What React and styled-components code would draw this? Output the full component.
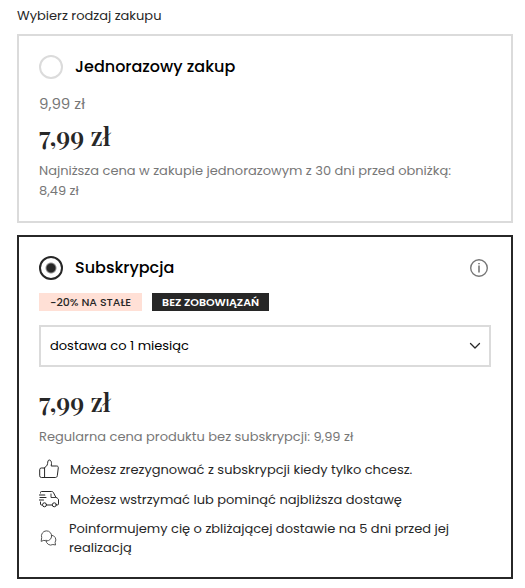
import React, { useState } from 'react'
import styled, { createGlobalStyle } from 'styled-components'

const GlobalStyle = createGlobalStyle`
  * {
    box-sizing: border-box;
  }

  body {
    margin: 0;
    background: #fff;
    color: #272727;
    font-family: Poppins, Inter, sans-serif;
    font-size: 13px;
    line-height: 20px;
  }
`

const Form = styled.form`
  padding: 6px 12px 8px 17px;
`

const Options = styled.fieldset`
  display: flex;
  flex-direction: column;
  gap: 12px;
  min-width: 0;
  margin: 0;
  padding: 0;
  border: 0;
`

const Legend = styled.legend`
  margin-bottom: 8px;
  padding: 0;
`

const Card = styled.section`
  padding: 19px 20px 20px;
  border: 2px solid ${({ $active }) => ($active ? '#272727' : '#dbdbdb')};
`

const CardHeader = styled.header`
  display: flex;
  align-items: center;
  justify-content: space-between;
`

const OptionLabel = styled.label`
  display: flex;
  align-items: center;
  gap: 12px;
  color: #000;
  font-size: 16px;
  font-weight: 500;
  line-height: 24px;
  cursor: pointer;
`

const Radio = styled.input`
  appearance: none;
  flex: none;
  width: 24px;
  height: 24px;
  margin: 0;
  border: 2px solid #dbdbdb;
  border-radius: 50%;

  &:checked {
    border-color: #272727;
    background: radial-gradient(circle, #272727 4px, transparent 6px);
  }
`

const InfoButton = styled.button`
  display: flex;
  padding: 2px;
  border: 0;
  background: none;
  color: #777;
`

const OldPrice = styled.p`
  margin: 15px 0 0;
  color: #777;
  font-size: 15px;
`

const Price = styled.p`
  margin: 3px 0 6px;
  font-family: 'Playfair Display', 'Liberation Serif', serif;
  font-size: 26px;
  font-weight: 600;
  line-height: 38px;
`

const Note = styled.p`
  margin: 0;
  color: #777;
`

const Tags = styled.div`
  display: flex;
  gap: 10px;
  margin: 13px 0 14px;
`

const Tag = styled.span`
  padding: 0 ${({ $dark }) => ($dark ? 10 : 11)}px;
  background: ${({ $dark }) => ($dark ? '#272727' : '#ffe0d6')};
  color: ${({ $dark }) => ($dark ? '#fff' : '#272727')};
  font-size: 11px;
  font-weight: ${({ $dark }) => ($dark ? 600 : 500)};
  line-height: 18px;
`

const SelectField = styled.div`
  display: grid;
  align-items: center;
  margin-bottom: 16px;

  > * {
    grid-area: 1 / 1;
  }

  svg {
    justify-self: end;
    margin-right: 10px;
    pointer-events: none;
  }
`

const Select = styled.select`
  appearance: none;
  width: 100%;
  height: 42px;
  padding: 0 32px 0 9px;
  border: 2px solid #dbdbdb;
  border-radius: 0;
  background: #fff;
  color: #000;
  font: inherit;
`

const Benefits = styled.ul`
  display: flex;
  flex-direction: column;
  gap: 10px;
  margin: 12px 0 0;
  padding: 0;
  line-height: 19px;
  list-style: none;
`

const Benefit = styled.li`
  display: flex;
  align-items: center;
  gap: 11px;

  svg {
    flex: none;
  }
`

const strokeProps = {
  fill: 'none',
  stroke: 'currentColor',
  strokeLinecap: 'round',
  strokeLinejoin: 'round',
  'aria-hidden': true,
}

const InfoIcon = () => (
  <svg width="20" height="20" viewBox="0 0 20 20" {...strokeProps}>
    <circle cx="10" cy="10" r="8.3" strokeWidth="1.4" />
    <path d="M10 7.5v7M10 5v1.3" strokeWidth="1.6" strokeLinecap="butt" />
  </svg>
)

const ChevronIcon = () => (
  <svg width="12" height="8" viewBox="0 0 12 8" {...strokeProps}>
    <path d="M1.5 1.5L6 6l4.5-4.5" stroke="#272727" strokeWidth="1.3" />
  </svg>
)

const ThumbIcon = () => (
  <svg width="20" height="20" viewBox="0 0 20 20" {...strokeProps}>
    <path d="M5.2 18.5H2.4Q.7 18.5.7 16.8v-6.1Q.7 9 2.4 9h2.8zM5.2 9l2-1.6c.8-.7 1.2-1.8 1.4-3C8.8 2.5 9 1 10.3 1c1.7 0 2.2 2 2.2 3.5L12.2 7h5.5c1.1 0 1.7.7 1.6 1.7l-1 8c-.1 1.1-.8 1.8-1.9 1.8H5.2" />
  </svg>
)

const VanIcon = () => (
  <svg width="20" height="20" viewBox="0 0 20 20" {...strokeProps}>
    <path d="M1.5 4V3.5Q1.5 2.5 2.5 2.5h10.2c.8 0 1.3.3 1.7 1l2.4 4.7 2 1.3c.5.3.7.7.7 1.2v4.2q0 1-1 1h-.7M12.800 16H8M3 16h-.5q-1 0-1-1v-2" />
    <path d="M12 5v3.5h4.5" strokeWidth=".9" />
    <path d="M.3 6h5.5M1 8.5h6M.3 11h4.2" strokeWidth="1.1" />
    <circle cx="5.5" cy="15.8" r="2" />
    <circle cx="15.3" cy="15.8" r="2" />
  </svg>
)

const ChatIcon = () => (
  <svg width="19" height="20" viewBox="0 0 19 20" {...strokeProps}>
    <path
      d="M2.2 13l.5-3.4A5.1 5.1 0 1 1 5.2 12.5zM12.3 7.2a4.6 4.6 0 0 1 3.800 7.100l.4 2.700-2.600-.5a4.600 4.600 0 0 1-6.800-4.300"
      stroke="#555"
    />
  </svg>
)

const benefits = [
  { icon: ThumbIcon, text: 'Możesz zrezygnować z subskrypcji kiedy tylko chcesz.' },
  { icon: VanIcon, text: 'Możesz wstrzymać lub pominąć najbliższa dostawę' },
  {
    icon: ChatIcon,
    text: 'Poinformujemy cię o zbliżającej dostawie na 5 dni przed jej realizacją',
  },
]

const PurchaseRadio = ({ value, selected, onSelect, children }) => (
  <OptionLabel>
    <Radio
      type="radio"
      name="purchase"
      value={value}
      checked={selected === value}
      onChange={() => onSelect(value)}
    />
    {children}
  </OptionLabel>
)

const App = () => {
  const [selected, setSelected] = useState('subscription')

  return (
    <>
      <GlobalStyle />
      <Form>
        <Options>
          <Legend>Wybierz rodzaj zakupu</Legend>
          <Card $active={selected === 'single'}>
            <CardHeader>
              <PurchaseRadio value="single" selected={selected} onSelect={setSelected}>
                Jednorazowy zakup
              </PurchaseRadio>
            </CardHeader>
            <OldPrice>9,99 zł</OldPrice>
            <Price>7,99 zł</Price>
            <Note>
              Najniższa cena w zakupie jednorazowym z 30 dni przed obniżką: 8,49&nbsp;zł
            </Note>
          </Card>
          <Card $active={selected === 'subscription'}>
            <CardHeader>
              <PurchaseRadio value="subscription" selected={selected} onSelect={setSelected}>
                Subskrypcja
              </PurchaseRadio>
              <InfoButton type="button" aria-label="Informacje">
                <InfoIcon />
              </InfoButton>
            </CardHeader>
            <Tags>
              <Tag>-20% NA STAŁE</Tag>
              <Tag $dark>BEZ ZOBOWIĄZAŃ</Tag>
            </Tags>
            <SelectField>
              <Select aria-label="Częstotliwość dostawy">
                <option>dostawa co 1 miesiąc</option>
              </Select>
              <ChevronIcon />
            </SelectField>
            <Price>7,99 zł</Price>
            <Note>Regularna cena produktu bez subskrypcji: 9,99 zł</Note>
            <Benefits>
              {benefits.map(({ icon: Icon, text }) => (
                <Benefit key={text}>
                  <Icon />
                  <span>{text}</span>
                </Benefit>
              ))}
            </Benefits>
          </Card>
        </Options>
      </Form>
    </>
  )
}

export default App
